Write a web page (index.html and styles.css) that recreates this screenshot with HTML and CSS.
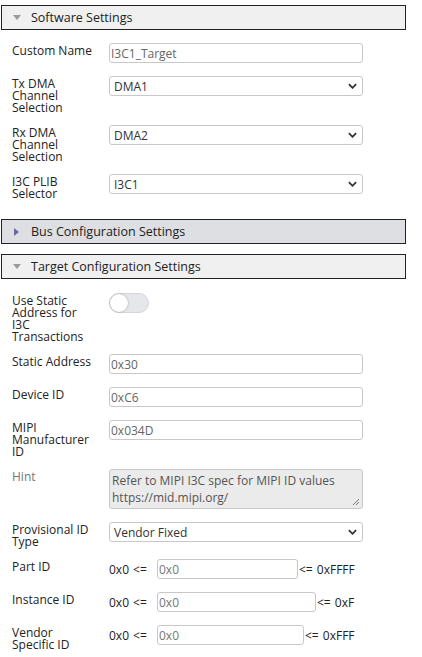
FILE: index.html
```html
<!DOCTYPE html>
<html>
<head>
<meta charset="utf-8">
<link rel="stylesheet" href="styles.css">
</head>
<body>
<div class="panel">
  <div class="hdr">
    <span class="tri-down"></span><span class="hdr-title">Software Settings</span>
  </div>
  <div class="section">
    <div class="row">
      <div class="lbl">Custom Name</div>
      <input class="ctl" type="text" value="I3C1_Target">
    </div>
    <div class="row">
      <div class="lbl">Tx DMA<br>Channel<br>Selection</div>
      <div class="sel"><span>DMA1</span><svg class="chev" viewBox="0 0 10 6"><path d="M1 1 L5 5 L9 1" /></svg></div>
    </div>
    <div class="row">
      <div class="lbl">Rx DMA<br>Channel<br>Selection</div>
      <div class="sel"><span>DMA2</span><svg class="chev" viewBox="0 0 10 6"><path d="M1 1 L5 5 L9 1" /></svg></div>
    </div>
    <div class="row">
      <div class="lbl">I3C PLIB<br>Selector</div>
      <div class="sel"><span>I3C1</span><svg class="chev" viewBox="0 0 10 6"><path d="M1 1 L5 5 L9 1" /></svg></div>
    </div>
  </div>

  <div class="hdr hdr-closed">
    <span class="tri-right"></span><span class="hdr-title">Bus Configuration Settings</span>
  </div>

  <div class="hdr">
    <span class="tri-down"></span><span class="hdr-title">Target Configuration Settings</span>
  </div>
  <div class="section section-target">
    <div class="row">
      <div class="lbl">Use Static<br>Address for<br>I3C<br>Transactions</div>
      <div class="toggle"><span class="knob"></span></div>
    </div>
    <div class="row">
      <div class="lbl">Static Address</div>
      <input class="ctl" type="text" value="0x30">
    </div>
    <div class="row">
      <div class="lbl">Device ID</div>
      <input class="ctl" type="text" value="0xC6">
    </div>
    <div class="row">
      <div class="lbl">MIPI<br>Manufacturer<br>ID</div>
      <input class="ctl" type="text" value="0x034D">
    </div>
    <div class="row">
      <div class="lbl lbl-muted">Hint</div>
      <div class="hint">Refer to MIPI I3C spec for MIPI ID values<br>https://mid.mipi.org/<svg class="grip" viewBox="0 0 8 8"><path d="M7 1 L1 7 M7 4 L4 7" /></svg></div>
    </div>
    <div class="row">
      <div class="lbl">Provisional ID<br>Type</div>
      <div class="sel"><span>Vendor Fixed</span><svg class="chev" viewBox="0 0 10 6"><path d="M1 1 L5 5 L9 1" /></svg></div>
    </div>
    <div class="row">
      <div class="lbl">Part ID</div>
      <div class="range"><span class="pre">0x0 &lt;=</span><input class="ctl rin w-part" type="text" value="0x0"><span class="post">&lt;= 0xFFFF</span></div>
    </div>
    <div class="row">
      <div class="lbl">Instance ID</div>
      <div class="range"><span class="pre">0x0 &lt;=</span><input class="ctl rin w-inst" type="text" value="0x0"><span class="post">&lt;= 0xF</span></div>
    </div>
    <div class="row">
      <div class="lbl">Vendor<br>Specific ID</div>
      <div class="range"><span class="pre">0x0 &lt;=</span><input class="ctl rin w-vend" type="text" value="0x0"><span class="post">&lt;= 0xFFF</span></div>
    </div>
  </div>
</div>
</body>
</html>
```
FILE: styles.css
```css
html, body {
  margin: 0;
  padding: 0;
  background: #ffffff;
}
body {
  font-family: "Open Sans", "Noto Sans", sans-serif;
  font-size: 12px;
  color: #222222;
}
.panel {
  width: 405px;
  margin-left: 1px;
  padding-top: 5px;
}
.hdr {
  box-sizing: border-box;
  height: 25px;
  border: 1px solid #222222;
  background: #f0f0f0;
  display: flex;
  align-items: center;
  padding-left: 11px;
}
.hdr-closed {
  background: #dddfe3;
  margin-bottom: 10px;
}
.hdr-title {
  font-size: 12.5px;
  color: #222;
  margin-left: 10px;
}
.tri-down {
  width: 0;
  height: 0;
  border-left: 4px solid transparent;
  border-right: 4px solid transparent;
  border-top: 5px solid #9a9a9a;
}
.tri-right {
  width: 0;
  height: 0;
  border-top: 4px solid transparent;
  border-bottom: 4px solid transparent;
  border-left: 5px solid #6a6aa8;
  margin-left: 1px;
  margin-right: 2px;
}
.section {
  padding: 13px 0 21px 11px;
  display: flex;
  flex-direction: column;
  gap: 13px;
}
.section-target {
  padding-top: 14px;
}
.row {
  display: grid;
  grid-template-columns: 97px auto;
  align-items: start;
}
.lbl {
  line-height: 12px;
  color: #222;
  margin-top: 2px;
  margin-bottom: -2px;
}
.lbl-muted {
  color: #777;
}
.ctl {
  box-sizing: border-box;
  width: 254px;
  height: 20px;
  margin: 0;
  border: 1px solid #c8c8c8;
  border-radius: 3px;
  padding: 0 1px;
  font-family: inherit;
  font-size: 12px;
  color: #666;
  background: #fff;
  outline: none;
}
.sel {
  box-sizing: border-box;
  width: 254px;
  height: 20px;
  border: 1px solid #c8c8c8;
  border-radius: 3px;
  display: flex;
  align-items: center;
  justify-content: space-between;
  padding: 0 5px 0 4px;
  color: #333;
}
.chev {
  width: 9px;
  height: 6px;
  fill: none;
  stroke: #333;
  stroke-width: 2;
}
.toggle {
  box-sizing: border-box;
  width: 40px;
  height: 20px;
  border-radius: 10px;
  background: #e5e7ea;
  border: 1px solid #d4d6d9;
  position: relative;
}
.knob {
  position: absolute;
  left: 0;
  top: 0;
  width: 18px;
  height: 18px;
  border-radius: 50%;
  background: #fff;
  box-shadow: 0 0 2px rgba(0,0,0,0.35);
}
.hint {
  box-sizing: border-box;
  width: 254px;
  height: 40px;
  border: 1px solid #c8c8c8;
  border-radius: 3px;
  background: #ebebeb;
  color: #555;
  line-height: 17px;
  padding: 2px 2px 0 2px;
  position: relative;
}
.grip {
  position: absolute;
  right: 2px;
  bottom: 2px;
  width: 8px;
  height: 8px;
  stroke: #777;
  stroke-width: 1;
  fill: none;
}
.range {
  display: flex;
  align-items: center;
  height: 20px;
}
.pre {
  width: 48px;
  color: #222;
  word-spacing: 1px;
}
.post {
  margin-left: 1px;
  color: #222;
  word-spacing: 1px;
}
.rin {
  color: #777;
}
.w-part { width: 141px; }
.w-inst { width: 159px; }
.w-vend { width: 147px; }
```
